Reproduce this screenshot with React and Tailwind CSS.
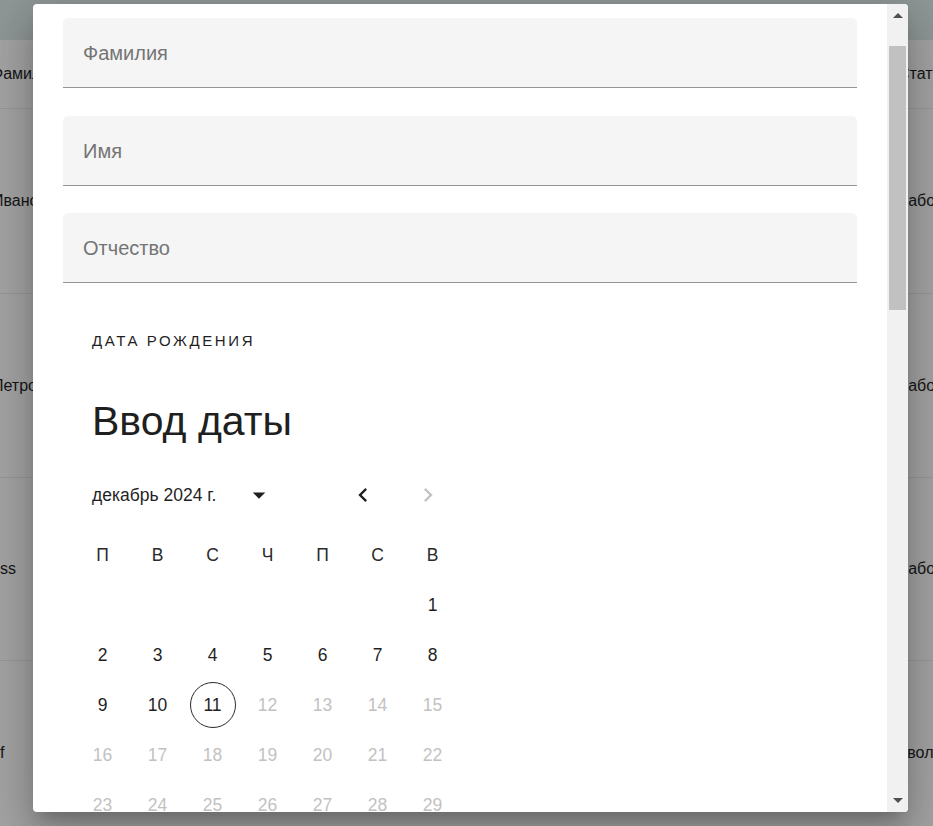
import React from "react";

const font = "font-['Liberation_Sans',Arial,sans-serif]";

function BgRow({ h, left, leftCls, right, border = true }) {
  return (
    <div
      className={`flex items-center justify-between ${h} ${border ? "border-b border-[#969696]" : ""} text-[16px] text-[#151515] whitespace-nowrap`}
    >
      <span className={leftCls}>{left}</span>
      <span className="w-[35px] shrink-0">{right}</span>
    </div>
  );
}

function Field({ label, cls }) {
  return (
    <div
      className={`flex h-[70px] items-center rounded-t-[5px] border-b border-[#949494] bg-[#f5f5f5] pl-[20px] text-[20px] text-[#747474] ${cls}`}
    >
      {label}
    </div>
  );
}

const weekdays = ["П", "В", "С", "Ч", "П", "С", "В"];

function buildCells() {
  const cells = [];
  for (let i = 0; i < 6; i++) cells.push(null);
  for (let d = 1; d <= 31; d++) cells.push(d);
  return cells;
}

export default function App() {
  const cells = buildCells();
  return (
    <div className={`relative h-[826px] w-[933px] overflow-hidden bg-[#a3a3a3] ${font}`}>
      {/* page behind the backdrop */}
      <div className="h-[40px] bg-[#8f9696]" />
      <BgRow h="h-[69px]" left="Фамилия" leftCls="-ml-[9px]" right="Статус" />
      <BgRow h="h-[185px]" left="Иванов" leftCls="-ml-[8px]" right="Работает" />
      <BgRow h="h-[184px]" left="Петров" leftCls="-ml-[8px]" right="Работает" />
      <BgRow h="h-[183px]" left="ss" leftCls="ml-0" right="Работает" />
      <BgRow h="h-[184px]" left="f" leftCls="ml-0" right="Уволен" border={false} />

      {/* dialog */}
      <div className="absolute left-[33px] top-[4px] flex h-[808px] w-[875px] overflow-hidden rounded-[4px] bg-white shadow-[0_11px_15px_-7px_rgba(0,0,0,0.2),0_24px_38px_3px_rgba(0,0,0,0.14),0_9px_46px_8px_rgba(0,0,0,0.12)]">
        <div className="flex-1 overflow-hidden px-[30px] pt-[14px]">
          <Field label="Фамилия" cls="" />
          <Field label="Имя" cls="mt-[28px]" />
          <Field label="Отчество" cls="mt-[27px]" />

          <div className="mt-[48px] pl-[29px] text-[15px] leading-[20px] tracking-[2.6px] text-[#1f1f1f]">
            ДАТА РОЖДЕНИЯ
          </div>
          <div className="mt-[46px] pl-[29px] text-[41px] leading-[48px] text-[#1f1f1f]">
            Ввод даты
          </div>

          <div className="mt-[30px] flex h-[40px] items-center">
            <div className="ml-[29px] w-[152px] whitespace-nowrap text-[17.5px] text-[#1f1f1f]">
              декабрь 2024 г.
            </div>
            <svg viewBox="0 0 24 24" className="h-[30px] w-[30px] fill-[#1f1f1f]">
              <path d="M7 10l5 5 5-5z" />
            </svg>
            <svg viewBox="0 0 24 24" className="ml-[75px] h-[28px] w-[28px] fill-[#1f1f1f]">
              <path d="M15.41 16.59 10.83 12l4.58-4.59L14 6l-6 6 6 6 1.41-1.41z" />
            </svg>
            <svg viewBox="0 0 24 24" className="ml-[37px] h-[28px] w-[28px] fill-[#c4c4c4]">
              <path d="M8.59 16.59 13.17 12 8.59 7.41 10 6l6 6-6 6-1.41-1.41z" />
            </svg>
          </div>

          <div className="mt-[15px] grid grid-cols-[repeat(7,55px)] pl-[12px] text-[17.5px]">
            {weekdays.map((w, i) => (
              <div key={i} className="flex h-[50px] items-center justify-center text-[#2a2a2a]">
                {w}
              </div>
            ))}
            {cells.map((d, i) => (
              <div key={`d${i}`} className="flex h-[50px] items-center justify-center">
                {d === null ? null : d === 11 ? (
                  <div className="flex h-[46px] w-[46px] items-center justify-center rounded-full border border-[#2a2a2a] text-[#1f1f1f]">
                    {d}
                  </div>
                ) : (
                  <span className={d > 11 ? "text-[#c2c2c2]" : "text-[#1f1f1f]"}>{d}</span>
                )}
              </div>
            ))}
          </div>
        </div>

        {/* scrollbar */}
        <div className="flex w-[21px] shrink-0 flex-col items-center bg-[#f1f1f1]">
          <div className="flex h-[22px] w-full items-center justify-center">
            <div className="h-0 w-0 border-x-[5px] border-b-[5px] border-x-transparent border-b-[#505050]" />
          </div>
          <div className="mt-[20px] h-[264px] w-[17px] bg-[#c1c1c1]" />
          <div className="flex-1" />
          <div className="flex h-[24px] w-full items-center justify-center">
            <div className="h-0 w-0 border-x-[5px] border-t-[5px] border-x-transparent border-t-[#505050]" />
          </div>
        </div>
      </div>
    </div>
  );
}
